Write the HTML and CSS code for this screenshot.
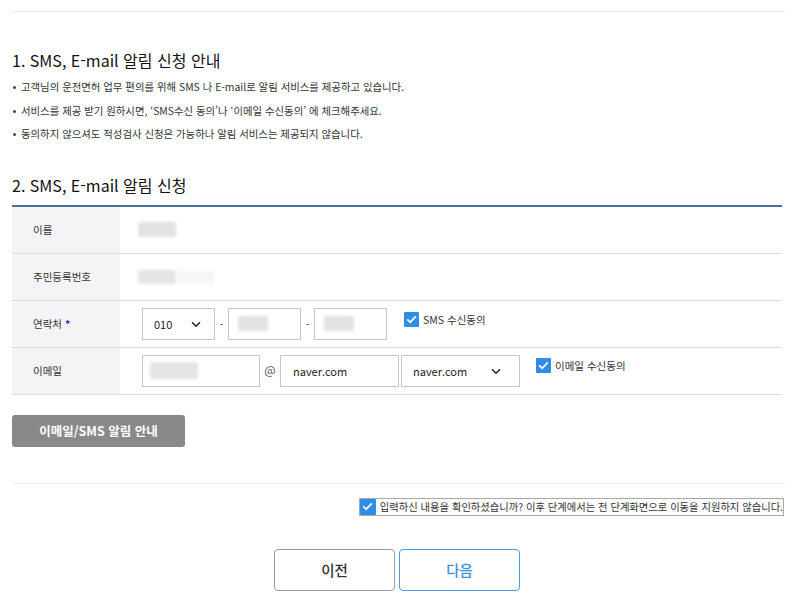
FILE: index.html
```html
<!DOCTYPE html>
<html lang="ko">
<head>
<meta charset="utf-8">
<title>SMS, E-mail 알림 신청</title>
<link rel="stylesheet" href="styles.css">
</head>
<body>
<div class="page">
  <div class="topline"></div>

  <h2 class="title first">1. SMS, E-mail 알림 신청 안내</h2>
  <ul class="notes">
    <li>고객님의 운전면허 업무 편의를 위해 SMS 나 E-mail로 알림 서비스를 제공하고 있습니다.</li>
    <li>서비스를 제공 받기 원하시면, ‘SMS수신 동의’나 ‘이메일 수신동의’ 에 체크해주세요.</li>
    <li>동의하지 않으셔도 적성검사 신청은 가능하나 알림 서비스는 제공되지 않습니다.</li>
  </ul>

  <h2 class="title second">2. SMS, E-mail 알림 신청</h2>
  <div class="form">
    <div class="row">
      <div class="label">이름</div>
      <div class="value"><span class="blur blur-name"></span></div>
    </div>
    <div class="row">
      <div class="label">주민등록번호</div>
      <div class="value"><span class="blur blur-id"></span><span class="blur blur-id2"></span></div>
    </div>
    <div class="row">
      <div class="label">연락처 <span class="req">*</span></div>
      <div class="value">
        <div class="select w73"><span>010</span>
          <svg class="chev" width="10" height="7" viewBox="0 0 10 7"><path d="M1 1.2 L5 5.2 L9 1.2" fill="none" stroke="#222" stroke-width="1.5"/></svg>
        </div>
        <span class="sep">-</span>
        <div class="input w73"><span class="blur blur-tel"></span></div>
        <span class="sep">-</span>
        <div class="input w73"><span class="blur blur-tel"></span></div>
        <label class="check">
          <span class="box"><svg width="11" height="9" viewBox="0 0 11 9"><path d="M1.2 4.4 L4.2 7.2 L9.8 1.4" fill="none" stroke="#fff" stroke-width="1.7"/></svg></span>
          <span class="check-text">SMS 수신동의</span>
        </label>
      </div>
    </div>
    <div class="row">
      <div class="label">이메일</div>
      <div class="value">
        <div class="input w118"><span class="blur blur-mail"></span></div>
        <span class="at">@</span>
        <div class="input w119"><span>naver.com</span></div>
        <div class="select w119 gap2"><span>naver.com</span>
          <svg class="chev" width="10" height="7" viewBox="0 0 10 7"><path d="M1 1.2 L5 5.2 L9 1.2" fill="none" stroke="#222" stroke-width="1.5"/></svg>
        </div>
        <label class="check">
          <span class="box"><svg width="11" height="9" viewBox="0 0 11 9"><path d="M1.2 4.4 L4.2 7.2 L9.8 1.4" fill="none" stroke="#fff" stroke-width="1.7"/></svg></span>
          <span class="check-text">이메일 수신동의</span>
        </label>
      </div>
    </div>
  </div>

  <button class="guide-btn" type="button">이메일/SMS 알림 안내</button>

  <div class="divider"></div>

  <div class="confirm-wrap">
    <label class="confirm">
      <span class="box big"><svg width="11" height="9" viewBox="0 0 11 9"><path d="M1.2 4.4 L4.2 7.2 L9.8 1.4" fill="none" stroke="#fff" stroke-width="1.7"/></svg></span>
      <span class="confirm-text">입력하신 내용을 확인하셨습니까? 이후 단계에서는 전 단계화면으로 이동을 지원하지 않습니다.</span>
    </label>
  </div>

  <div class="actions">
    <button class="btn prev" type="button">이전</button>
    <button class="btn next" type="button">다음</button>
  </div>
</div>
</body>
</html>
```

FILE: styles.css
```css
* { box-sizing: border-box; }

html, body {
  margin: 0;
  padding: 0;
  background: #fff;
}

body {
  font-family: "Noto Sans CJK KR", "Noto Sans", sans-serif;
  color: #222;
  width: 800px;
  height: 599px;
  overflow: hidden;
}

.page {
  padding: 11px 18px 0 12px;
}

.topline {
  height: 1px;
  background: #e8e8e8;
  margin-right: -3px;
}

.title {
  margin: 0;
  font-size: 16px;
  font-weight: 400;
  line-height: 24px;
  color: #111;
}

.title.first { margin-top: 36px; }
.title.second { margin-top: 27px; }

.notes {
  list-style: none;
  margin: 3px 0 0 0;
  padding: 0;
}

.notes li {
  position: relative;
  padding-left: 9px;
  font-size: 10.4px;
  line-height: 23.5px;
  color: #333;
}

.notes li::before {
  content: "";
  position: absolute;
  left: 1px;
  top: 11px;
  width: 3px;
  height: 3px;
  border-radius: 50%;
  background: #444;
}

.form {
  margin-top: 8px;
  border-top: 2px solid #4a70a3;
}

.row {
  display: flex;
  height: 47px;
  border-bottom: 1px solid #dcdcdc;
}

.label {
  width: 108px;
  flex: none;
  background: #f4f4f6;
  padding-left: 21px;
  display: flex;
  align-items: center;
  font-size: 10.5px;
  color: #333;
}

.req {
  color: #1c3f9e;
  margin-left: 3px;
  font-weight: 700;
}

.value {
  flex: 1;
  display: flex;
  align-items: center;
  padding-left: 22px;
}

.blur {
  display: inline-block;
  background: #e2e2e2;
  filter: blur(1.5px);
  border-radius: 2px;
}

.blur-name { width: 38px; height: 15px; margin-left: -4px; }
.blur-id { width: 38px; height: 14px; margin-left: -4px; background: #e4e4e4; }
.blur-id2 { width: 38px; height: 14px; background: #f6f6f6; }
.blur-tel { width: 30px; height: 15px; margin-left: -2px; }
.blur-mail { width: 48px; height: 17px; margin-left: -4px; background: #e4e4e4; }

.select, .input {
  height: 32px;
  border: 1px solid #c6c6c6;
  background: #fff;
  display: flex;
  align-items: center;
  font-size: 11px;
  color: #222;
  flex: none;
}

.select {
  justify-content: space-between;
  padding: 0 13px 0 11px;
}

.input { padding-left: 11px; }
.input span:not(.blur) { padding-left: 1px; }

.w73 { width: 73px; }
.w118 { width: 118px; }
.w119 { width: 119px; }
.gap2 { margin-left: 2px; }
.select.w119 { padding-right: 18px; }

.chev { display: block; margin-top: 1px; }

.sep {
  width: 13px;
  text-align: center;
  font-size: 11px;
  color: #555;
  flex: none;
}

.at {
  width: 20px;
  text-align: center;
  font-size: 12px;
  color: #555;
  flex: none;
  margin-top: -2px;
}

.check {
  display: flex;
  align-items: center;
  align-self: flex-start;
  margin-top: 11px;
  margin-left: 17px;
}

.row:last-child .check { margin-top: 10px; margin-left: 16px; }

.box {
  width: 15px;
  height: 15px;
  background: #2d8ee8;
  border-radius: 1px;
  display: flex;
  align-items: center;
  justify-content: center;
  flex: none;
}

.box.big { width: 16px; height: 16px; }

.check-text {
  font-size: 10.5px;
  color: #333;
  margin-left: 4px;
}

.guide-btn {
  display: block;
  margin-top: 20px;
  width: 173px;
  height: 32px;
  border: 0;
  border-radius: 3px;
  background: #898989;
  color: #fff;
  font-family: inherit;
  font-size: 12.5px;
  font-weight: 700;
  padding: 0;
}

.divider {
  margin-top: 36px;
  height: 1px;
  background: #efefef;
  margin-right: -3px;
}

.confirm-wrap {
  display: flex;
  justify-content: flex-end;
  margin-top: 15px;
  margin-right: -1px;
}

.confirm {
  display: flex;
  align-items: center;
  outline: 1px solid #a9a9a9;
  outline-offset: 0;
  height: 16px;
}

.confirm-text {
  font-size: 10.3px;
  color: #333;
  margin-left: 4px;
  line-height: 16px;
  white-space: nowrap;
}

.actions {
  display: flex;
  justify-content: center;
  gap: 4px;
  margin-top: 34px;
}

.btn {
  width: 121px;
  height: 42px;
  background: #fff;
  border-radius: 4px;
  font-family: inherit;
  font-size: 14.5px;
  font-weight: 500;
  padding: 0;
}

.btn.prev {
  border: 1px solid #9a9a9a;
  color: #333;
}

.btn.next {
  border: 1.5px solid #4a9ae2;
  color: #3f8fdc;
}
```
